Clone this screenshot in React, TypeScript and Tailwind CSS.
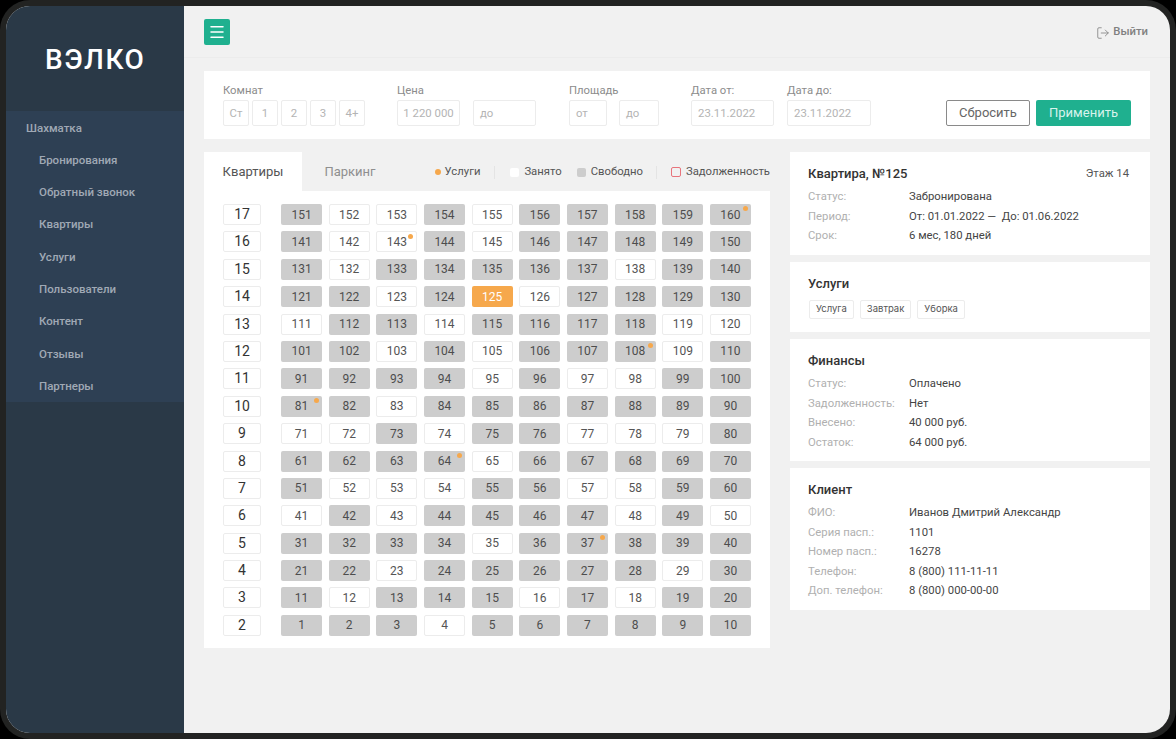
import { LogOut, Menu } from "lucide-react";

const menu = ["Бронирования", "Обратный звонок", "Квартиры", "Услуги", "Пользователи", "Контент", "Отзывы", "Партнеры"];
const floors = [17, 16, 15, 14, 13, 12, 11, 10, 9, 8, 7, 6, 5, 4, 3, 2];
const occupied = [152, 153, 155, 142, 143, 145, 132, 138, 123, 126, 111, 114, 119, 120, 103, 105, 109, 95, 97, 98, 83, 71, 72, 74, 77, 78, 79, 65, 52, 53, 54, 57, 58, 41, 43, 48, 50, 35, 23, 29, 12, 16, 18, 4];
const withService = [160, 143, 108, 81, 64, 37];

function Field({ children, className }: { children: string; className: string }) {
  return (
    <div className={`flex h-[26px] items-center rounded-[2px] border border-[#ececec] pt-[1px] text-[11.4px] text-[#b4b4b4] ${className}`}>
      {children}
    </div>
  );
}

function Flat({ n }: { n: number }) {
  const free = !occupied.includes(n);
  let tone = free ? "bg-[#cdcdcd] text-[#4d4d4d]" : "bg-white border border-[#ececec] text-[#555]";
  if (n === 125) tone = "bg-[#f6a84c] text-white";
  return (
    <div className={`relative flex h-[21px] items-center justify-center rounded-[2px] text-[12px] ${tone}`}>
      {n}
      {withService.includes(n) && <span className="absolute right-[3px] top-[2px] h-[5px] w-[5px] rounded-full bg-[#f6a84c]" />}
    </div>
  );
}

function Row({ label, value }: { label: string; value: string }) {
  return (
    <div className="flex h-[19.5px] items-center text-[11.3px]">
      <span className="w-[101px] text-[#b0b0b0]">{label}</span>
      <span className="whitespace-pre text-[#444]">{value}</span>
    </div>
  );
}

function Card({ title, className, children }: { title: string; className: string; children: React.ReactNode }) {
  return (
    <div className={`bg-white px-[18px] ${className}`}>
      <div className="mb-[4px] text-[13px] font-medium leading-[20px] text-[#333]">{title}</div>
      {children}
    </div>
  );
}

export default function App() {
  const rows: number[][] = floors.map((f) => {
    const start = (f - 2) * 10 + 1;
    return Array.from({ length: 10 }, (_, i) => start + i);
  });

  return (
    <div className="h-[739px] w-[1176px] overflow-hidden bg-black font-['Roboto',sans-serif]">
      <div className="h-full rounded-[30px] bg-[#222322] p-[6px]">
        <div className="flex h-full overflow-hidden rounded-[24px] bg-[#f1f1f1]">
          {/* Sidebar */}
          <aside className="w-[178px] shrink-0 bg-[#2a3947]">
            <div className="flex h-[105px] items-center pl-[39px] pt-[3px] text-[28px] font-medium leading-none tracking-[1.6px] text-white">
              ВЭЛКО
            </div>
            <nav className="h-[291px] bg-[#2e4054] pt-[7px] text-[11.5px] font-medium text-[#a0a9b5]">
              <div className="flex h-[21px] items-center pl-[20px]">Шахматка</div>
              <div className="mt-[11px] flex flex-col gap-[11.3px] pl-[33px]">
                {menu.map((item) => (
                  <div key={item} className="flex h-[21px] items-center">
                    {item}
                  </div>
                ))}
              </div>
            </nav>
          </aside>

          <main className="min-w-0 flex-1">
            {/* Top bar */}
            <header className="flex h-[52px] items-center justify-between border-b border-[#ececec] pl-[20px] pr-[22px]">
              <button className="flex h-[26px] w-[26px] items-center justify-center rounded-[2px] bg-[#1fb08f] text-white">
                <Menu size={18} strokeWidth={2} />
              </button>
              <div className="flex items-center gap-[3px] pt-[2px] text-[11.3px] font-medium text-[#808080]">
                <LogOut size={14} strokeWidth={1.4} />
                Выйти
              </div>
            </header>

            <div className="px-[20px] pt-[13px]">
              {/* Filters */}
              <section className="flex h-[68px] items-start bg-white px-[19px] pt-[13px]">
                <div className="w-[174px]">
                  <div className="mb-[2px] text-[11.3px] leading-[14px] text-[#8c8c8c]">Комнат</div>
                  <div className="flex gap-[3px]">
                    {["Ст", "1", "2", "3", "4+"].map((t) => (
                      <Field key={t} className="w-[26px] justify-center">{t}</Field>
                    ))}
                  </div>
                </div>
                <div className="w-[172px]">
                  <div className="mb-[2px] text-[11.3px] leading-[14px] text-[#8c8c8c]">Цена</div>
                  <div className="flex gap-[13px]">
                    <Field className="w-[63px] justify-center">1 220 000</Field>
                    <Field className="w-[63px] pl-[6px]">до</Field>
                  </div>
                </div>
                <div className="w-[122px]">
                  <div className="mb-[2px] text-[11.3px] leading-[14px] text-[#8c8c8c]">Площадь</div>
                  <div className="flex gap-[12px]">
                    <Field className="w-[38px] pl-[6px]">от</Field>
                    <Field className="w-[40px] pl-[6px]">до</Field>
                  </div>
                </div>
                <div className="w-[96px]">
                  <div className="mb-[2px] text-[11.3px] leading-[14px] text-[#8c8c8c]">Дата от:</div>
                  <Field className="w-[83px] pl-[6px]">23.11.2022</Field>
                </div>
                <div>
                  <div className="mb-[2px] text-[11.3px] leading-[14px] text-[#8c8c8c]">Дата до:</div>
                  <Field className="w-[84px] pl-[6px]">23.11.2022</Field>
                </div>
                <div className="ml-auto mt-[16px] flex gap-[6px]">
                  <button className="h-[26px] w-[84px] rounded-[2px] border border-[#8a8a8a] text-[13px] text-[#666]">Сбросить</button>
                  <button className="h-[26px] w-[95px] rounded-[2px] bg-[#1fb08f] text-[13px] text-[#d9f3ec]">Применить</button>
                </div>
              </section>

              <div className="mt-[13px] flex gap-[20px]">
                {/* Chess board */}
                <section className="w-[566px] shrink-0">
                  <div className="flex h-[39px] items-center">
                    <div className="flex h-full w-[98px] items-center justify-center bg-white text-[13px] text-[#555]">Квартиры</div>
                    <div className="w-[96px] text-center text-[13px] text-[#8f8f8f]">Паркинг</div>
                    <div className="ml-auto flex items-center pt-[1px] text-[11.3px] text-[#555]">
                      <span className="mr-[4px] h-[6px] w-[6px] rounded-full bg-[#f6a84c]" />
                      Услуги
                      <span className="ml-[14px] mr-[15px] h-[13px] w-px bg-[#e4e4e4]" />
                      <span className="mr-[5px] h-[9px] w-[9px] rounded-[2px] bg-white" />
                      Занято
                      <span className="ml-[15px] mr-[5px] h-[9px] w-[9px] rounded-[2px] bg-[#cdcdcd]" />
                      Свободно
                      <span className="ml-[13px] mr-[14px] h-[13px] w-px bg-[#e4e4e4]" />
                      <span className="mr-[5px] h-[10px] w-[10px] rounded-[2px] border border-[#e8747c]" />
                      Задолженность
                    </div>
                  </div>
                  <div className="flex h-[457px] gap-[20px] bg-white pl-[19px] pt-[13px]">
                    <div className="flex w-[38px] flex-col gap-[6.4px]">
                      {floors.map((f) => (
                        <div key={f} className="flex h-[21px] items-center justify-center rounded-[2px] border border-[#ececec] text-[14px] text-[#333]">
                          {f}
                        </div>
                      ))}
                    </div>
                    <div className="flex w-[470px] flex-col gap-[6.4px]">
                      {rows.map((row) => (
                        <div key={row[0]} className="grid grid-cols-10 gap-x-[6.6px]">
                          {row.map((n) => (
                            <Flat key={n} n={n} />
                          ))}
                        </div>
                      ))}
                    </div>
                  </div>
                </section>

                {/* Details */}
                <section className="flex flex-1 flex-col gap-[7px]">
                  <div className="h-[103px] bg-white px-[18px] pt-[12px]">
                    <div className="mb-[4px] flex items-center justify-between pr-[3px] leading-[20px]">
                      <span className="text-[13px] font-medium text-[#333]">Квартира, №125</span>
                      <span className="text-[11.3px] text-[#555]">Этаж 14</span>
                    </div>
                    <Row label="Статус:" value="Забронирована" />
                    <Row label="Период:" value="От: 01.01.2022 —  До: 01.06.2022" />
                    <Row label="Срок:" value="6 мес, 180 дней" />
                  </div>
                  <Card title="Услуги" className="h-[70px] pt-[12px]">
                    <div className="ml-[1px] mt-[6px] flex gap-[6px]">
                      {["Услуга", "Завтрак", "Уборка"].map((t) => (
                        <span key={t} className="flex h-[19px] items-center rounded-[2px] border border-[#ececec] px-[6px] font-['Inter',sans-serif] text-[9.5px] text-[#555]">
                          {t}
                        </span>
                      ))}
                    </div>
                  </Card>
                  <Card title="Финансы" className="h-[122px] pt-[12px]">
                    <Row label="Статус:" value="Оплачено" />
                    <Row label="Задолженность:" value="Нет" />
                    <Row label="Внесено:" value="40 000 руб." />
                    <Row label="Остаток:" value="64 000 руб." />
                  </Card>
                  <Card title="Клиент" className="h-[142px] pt-[12px]">
                    <Row label="ФИО:" value="Иванов Дмитрий Александр" />
                    <Row label="Серия пасп.:" value="1101" />
                    <Row label="Номер пасп.:" value="16278" />
                    <Row label="Телефон:" value="8 (800) 111-11-11" />
                    <Row label="Доп. телефон:" value="8 (800) 000-00-00" />
                  </Card>
                </section>
              </div>
            </div>
          </main>
        </div>
      </div>
    </div>
  );
}
